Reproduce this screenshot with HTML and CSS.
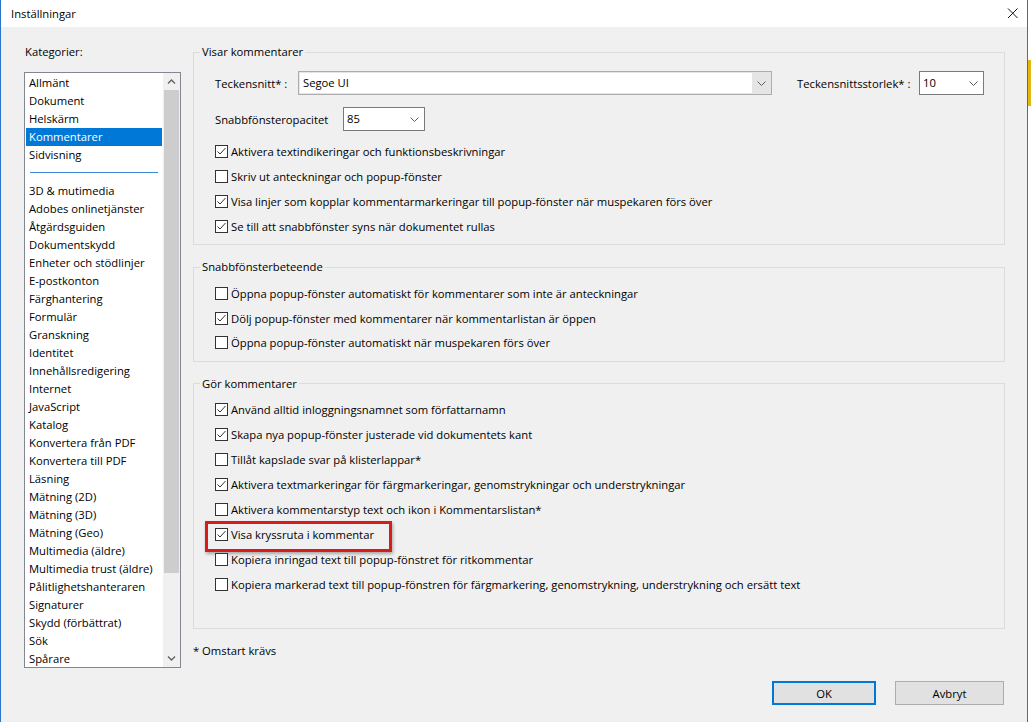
FILE: index.html
```html
<!DOCTYPE html>
<html lang="sv">
<head>
<meta charset="utf-8">
<title>Inställningar</title>
<link rel="stylesheet" href="styles.css">
</head>
<body>
<div class="screen">
  <div class="window">
    <div class="titlebar">
      <span class="title">Inställningar</span>
      <svg class="close" width="11" height="11" viewBox="0 0 11 11"><path d="M1 0.5 L10.5 10 M10.5 0.5 L1 10" stroke="#111" stroke-width="1" fill="none"/></svg>
    </div>
    <div class="content">
      <div class="main">
        <div class="left">
          <div class="cat-label">Kategorier:</div>
          <div class="listbox">
            <ul class="items">
              <li>Allmänt</li>
              <li>Dokument</li>
              <li>Helskärm</li>
              <li class="sel">Kommentarer</li>
              <li>Sidvisning</li>
              <li class="sep"><span class="sep-line"></span></li>
              <li>3D &amp; mutimedia</li>
              <li>Adobes onlinetjänster</li>
              <li>Åtgärdsguiden</li>
              <li>Dokumentskydd</li>
              <li>Enheter och stödlinjer</li>
              <li>E-postkonton</li>
              <li>Färghantering</li>
              <li>Formulär</li>
              <li>Granskning</li>
              <li>Identitet</li>
              <li>Innehållsredigering</li>
              <li>Internet</li>
              <li>JavaScript</li>
              <li>Katalog</li>
              <li>Konvertera från PDF</li>
              <li>Konvertera till PDF</li>
              <li>Läsning</li>
              <li>Mätning (2D)</li>
              <li>Mätning (3D)</li>
              <li>Mätning (Geo)</li>
              <li>Multimedia (äldre)</li>
              <li>Multimedia trust (äldre)</li>
              <li>Pålitlighetshanteraren</li>
              <li>Signaturer</li>
              <li>Skydd (förbättrat)</li>
              <li>Sök</li>
              <li>Spårare</li>
            </ul>
            <div class="vscroll">
              <div class="sb-btn"><svg width="9" height="5" viewBox="0 0 9 5"><polyline points="1,4.5 4.5,1 8,4.5" fill="none" stroke="#606060" stroke-width="1.3"/></svg></div>
              <div class="sb-track"><div class="sb-thumb"></div></div>
              <div class="sb-btn"><svg width="9" height="5" viewBox="0 0 9 5"><polyline points="1,0.5 4.5,4 8,0.5" fill="none" stroke="#606060" stroke-width="1.3"/></svg></div>
            </div>
          </div>
        </div>

        <div class="right">
          <fieldset class="group">
            <legend>Visar kommentarer</legend>
            <div class="gbody gbody1">
              <div class="frow">
                <span class="lbl lbl-font">Teckensnitt* :</span>
                <div class="combo edit w-font">
                  <span class="val">Segoe UI</span>
                  <span class="arrow"><svg width="9" height="5" viewBox="0 0 9 5"><polyline points="0.5,0.5 4.5,4.5 8.5,0.5" fill="none" stroke="#606060" stroke-width="1"/></svg></span>
                </div>
                <span class="lbl lbl-size">Teckensnittsstorlek* :</span>
                <div class="combo w-size">
                  <span class="val">10</span>
                  <span class="arrow"><svg width="9" height="5" viewBox="0 0 9 5"><polyline points="0.5,0.5 4.5,4.5 8.5,0.5" fill="none" stroke="#606060" stroke-width="1"/></svg></span>
                </div>
              </div>
              <div class="frow frow2">
                <span class="lbl lbl-op">Snabbfönsteropacitet</span>
                <div class="combo w-op">
                  <span class="val">85</span>
                  <span class="arrow"><svg width="9" height="5" viewBox="0 0 9 5"><polyline points="0.5,0.5 4.5,4.5 8.5,0.5" fill="none" stroke="#606060" stroke-width="1"/></svg></span>
                </div>
              </div>
              <div class="checks checks1">
                <div class="check"><span class="box"><svg width="11" height="11" viewBox="0 0 11 11"><polyline points="1.5,5.5 4,8 9.5,2" fill="none" stroke="#333" stroke-width="1"/></svg></span>Aktivera textindikeringar och funktionsbeskrivningar</div>
                <div class="check"><span class="box"></span>Skriv ut anteckningar och popup-fönster</div>
                <div class="check"><span class="box"><svg width="11" height="11" viewBox="0 0 11 11"><polyline points="1.5,5.5 4,8 9.5,2" fill="none" stroke="#333" stroke-width="1"/></svg></span>Visa linjer som kopplar kommentarmarkeringar till popup-fönster när muspekaren förs över</div>
                <div class="check"><span class="box"><svg width="11" height="11" viewBox="0 0 11 11"><polyline points="1.5,5.5 4,8 9.5,2" fill="none" stroke="#333" stroke-width="1"/></svg></span>Se till att snabbfönster syns när dokumentet rullas</div>
              </div>
            </div>
          </fieldset>

          <fieldset class="group g2">
            <legend>Snabbfönsterbeteende</legend>
            <div class="gbody gbody2">
              <div class="check"><span class="box"></span>Öppna popup-fönster automatiskt för kommentarer som inte är anteckningar</div>
              <div class="check"><span class="box"><svg width="11" height="11" viewBox="0 0 11 11"><polyline points="1.5,5.5 4,8 9.5,2" fill="none" stroke="#333" stroke-width="1"/></svg></span>Dölj popup-fönster med kommentarer när kommentarlistan är öppen</div>
              <div class="check"><span class="box"></span>Öppna popup-fönster automatiskt när muspekaren förs över</div>
            </div>
          </fieldset>

          <fieldset class="group g3">
            <legend>Gör kommentarer</legend>
            <div class="gbody gbody3">
              <div class="check"><span class="box"><svg width="11" height="11" viewBox="0 0 11 11"><polyline points="1.5,5.5 4,8 9.5,2" fill="none" stroke="#333" stroke-width="1"/></svg></span>Använd alltid inloggningsnamnet som författarnamn</div>
              <div class="check"><span class="box"><svg width="11" height="11" viewBox="0 0 11 11"><polyline points="1.5,5.5 4,8 9.5,2" fill="none" stroke="#333" stroke-width="1"/></svg></span>Skapa nya popup-fönster justerade vid dokumentets kant</div>
              <div class="check"><span class="box"></span>Tillåt kapslade svar på klisterlappar*</div>
              <div class="check"><span class="box"><svg width="11" height="11" viewBox="0 0 11 11"><polyline points="1.5,5.5 4,8 9.5,2" fill="none" stroke="#333" stroke-width="1"/></svg></span>Aktivera textmarkeringar för färgmarkeringar, genomstrykningar och understrykningar</div>
              <div class="check"><span class="box"></span>Aktivera kommentarstyp text och ikon i Kommentarslistan*</div>
              <div class="check"><span class="box"><svg width="11" height="11" viewBox="0 0 11 11"><polyline points="1.5,5.5 4,8 9.5,2" fill="none" stroke="#333" stroke-width="1"/></svg></span>Visa kryssruta i kommentar<span class="hl"></span></div>
              <div class="check"><span class="box"></span>Kopiera inringad text till popup-fönstret för ritkommentar</div>
              <div class="check"><span class="box"></span>Kopiera markerad text till popup-fönstren för färgmarkering, genomstrykning, understrykning och ersätt text</div>
            </div>
          </fieldset>

          <div class="note">* Omstart krävs</div>
        </div>
      </div>

      <div class="footer">
        <button class="btn btn-ok">OK</button>
        <button class="btn btn-cancel">Avbryt</button>
      </div>
    </div>
  </div>
  <div class="desk"><div class="gold"></div></div>
</div>
</body>
</html>
```

FILE: styles.css
```css
* { box-sizing: border-box; }
html, body { margin: 0; padding: 0; }
body {
  width: 1031px;
  height: 722px;
  overflow: hidden;
  background: #fff;
  font-family: "Segoe UI", "Open Sans", sans-serif;
  font-size: 11.25px;
  color: #000;
}
.screen { display: flex; width: 1031px; height: 722px; }
.window {
  width: 1028px;
  height: 722px;
  flex: none;
  display: flex;
  flex-direction: column;
  border-left: 1px solid #2a75c9;
  border-right: 1px solid #2a75c9;
  background: #f0f0f0;
}
.titlebar {
  height: 27px;
  flex: none;
  background: #fff;
  display: flex;
  align-items: center;
  justify-content: space-between;
  padding: 0 9px 0 10px;
}
.title { line-height: 16px; }
.close { display: block; }

.content { flex: 1; padding: 17px 22px 0 23px; }
.main { display: flex; gap: 12px; align-items: flex-start; height: 624px; }

.left { width: 157px; flex: none; }
.cat-label { line-height: 16px; padding-left: 1px; }
.listbox {
  margin-top: 12px;
  height: 596px;
  border: 1px solid #828790;
  background: #fff;
  display: flex;
}
.items {
  list-style: none;
  margin: 0;
  padding: 1px 0 0 0;
  flex: 1;
  min-width: 0;
  overflow: hidden;
}
.items li {
  height: 18px;
  line-height: 18px;
  margin: 0 1px;
  padding-left: 3px;
  white-space: nowrap;
}
.items li.sel { background: #0078d7; color: #fff; }
.items li.sep { padding-top: 8px; }
.sep-line { display: block; margin-left: 1px; width: 128px; height: 1px; background: #3a86d4; }

.vscroll { width: 17px; flex: none; background: #f0f0f0; display: flex; flex-direction: column; }
.sb-btn { height: 17px; flex: none; display: flex; align-items: center; justify-content: center; }
.sb-btn svg { display: block; }
.sb-track { flex: 1; }
.sb-thumb { height: 483px; margin: 0 1px; background: #cdcdcd; }

.right { width: 812px; flex: none; }
.group {
  margin: 0;
  padding: 0;
  border: 1px solid #dcdcdc;
  width: 812px;
  min-width: 0;
}
.group legend { padding: 0 2px; margin-left: 6px; line-height: 16px; }
.g2 { margin-top: 14px; }
.g3 { margin-top: 13.5px; }

.gbody1 { padding: 11px 0 5px 21px; }
.gbody2 { padding: 6.5px 0 6px 21px; }
.gbody2 .check { height: 24.5px; }
.gbody3 { padding: 5.5px 0 31px 21px; }

.frow { display: flex; align-items: center; height: 24px; }
.frow2 { margin-top: 12px; }
.lbl { white-space: nowrap; flex: none; }
.lbl-font { width: 83px; }
.lbl-size { width: 122px; margin-left: 25px; }
.lbl-op { width: 128px; }

.combo {
  display: flex;
  height: 24px;
  border: 1px solid #7a7a7a;
  background: #fff;
  flex: none;
}
.combo .val { flex: 1; padding-left: 3px; line-height: 22px; }
.combo .arrow { width: 19px; display: flex; align-items: center; justify-content: center; }
.combo .arrow svg { display: block; }
.combo.edit { border-color: #adadad; background: #e5e5e5; }
.combo.edit .val { background: #fff; margin: 1px 0 1px 1px; line-height: 20px; }
.w-font { width: 474px; }
.w-size { width: 65px; }
.w-op { width: 82px; }

.checks1 { margin-top: 8px; }
.check {
  position: relative;
  display: flex;
  align-items: center;
  height: 25px;
  white-space: nowrap;
}
.box {
  display: block;
  width: 13px;
  height: 13px;
  border: 1px solid #333;
  background: #fff;
  margin-right: 3px;
  flex: none;
}
.box svg { display: block; }
.hl {
  position: absolute;
  left: -10px;
  top: -1.5px;
  width: 187px;
  height: 31px;
  border: 3px solid #d81c1c;
  box-shadow: 1px 2px 3px rgba(0, 0, 0, 0.3);
  pointer-events: none;
}

.note { margin-top: 13.5px; line-height: 16px; }

.footer { display: flex; justify-content: flex-end; gap: 19px; margin-top: 13px; padding-right: 1px; }
.btn {
  height: 24px;
  padding: 0;
  border: 1px solid #adadad;
  background: #e1e1e1;
  font: inherit;
  color: #000;
}
.btn-ok { width: 104px; border: 2px solid #0078d7; }
.btn-cancel { width: 109px; }

.desk { width: 3px; flex: none; background: #fff; display: flex; flex-direction: column; }
.gold { margin-top: 60px; height: 46px; background: #e2b710; }
```
